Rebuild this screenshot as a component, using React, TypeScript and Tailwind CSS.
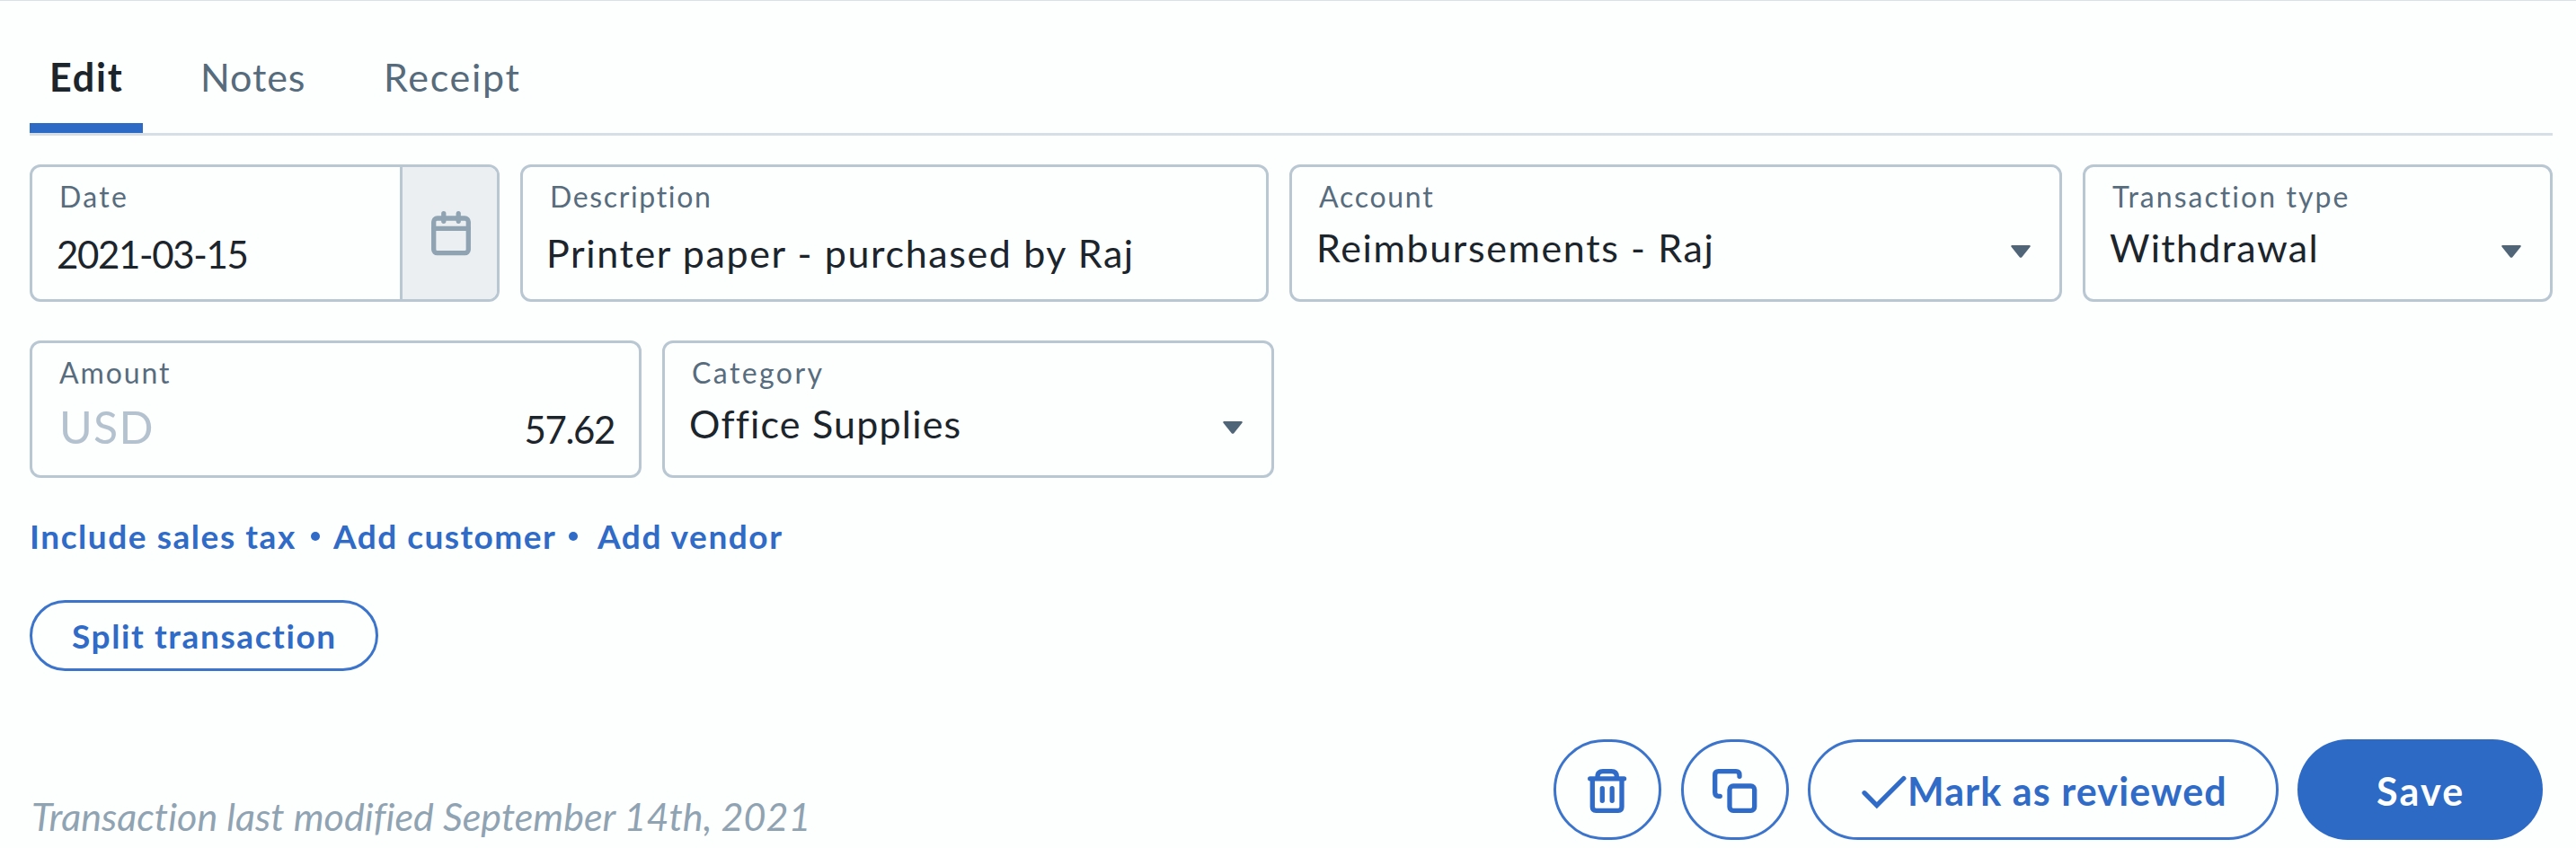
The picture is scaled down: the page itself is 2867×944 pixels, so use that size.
import type { ReactNode } from "react";

type FieldProps = {
  label: string;
  labelClass: string;
  className: string;
  children: ReactNode;
  aside?: ReactNode;
};

function Field({ label, labelClass, className, children, aside }: FieldProps) {
  return (
    <div
      className={`flex h-[153px] shrink-0 overflow-hidden rounded-[12px] border-[3px] border-[#b9c7d2] bg-[#fdfefe] ${className}`}
    >
      <div className="flex min-w-0 flex-1 flex-col pt-[13px]">
        <div className={`pl-[30px] text-[32px] leading-[40px] text-[#576c7d] ${labelClass}`}>{label}</div>
        {children}
      </div>
      {aside}
    </div>
  );
}

function Caret() {
  return (
    <svg className="mt-[21px] h-[16px] w-[24px] shrink-0" viewBox="0 0 24 16" fill="#506577">
      <path d="M2.4 1h19.2c1.1 0 1.5 1 .9 1.8l-9.2 11.4c-.7.8-1.9.8-2.6 0L1.500 2.800C.9 2 1.300 1 2.400 1z" />
    </svg>
  );
}

function SelectValue({ text, textClass, padClass }: { text: string; textClass: string; padClass: string }) {
  return (
    <div className={`mt-[12px] flex justify-between pl-[27px] text-[43px] leading-[50px] text-[#1c252c] ${padClass}`}>
      <span className={textClass}>{text}</span>
      <Caret />
    </div>
  );
}

function Dot() {
  return <span className="mt-[20px] size-[10px] rounded-full bg-[#2f6bc7]" />;
}

export default function App() {
  return (
    <div className="h-[944px] w-[2867px] overflow-hidden whitespace-nowrap border-t border-[#d8e1e9] bg-[#fdfefe] pl-[33px] font-['Lato',sans-serif] text-[#1c252c]">
      <nav className="flex h-[150px] w-[2808px] border-b-[3px] border-[#d6dfe6] text-[43px] leading-[50px] text-[#566b7c]">
        <div className="w-[126px] border-b-[11px] border-[#2d6ac6] pt-[60px] pl-[22px] font-bold tracking-[1.8px] text-[#1c252c]">
          Edit
        </div>
        <div className="ml-[64px] w-[204px] pt-[60px] tracking-[0.9px]">Notes</div>
        <div className="pt-[60px] tracking-[1.7px]">Receipt</div>
      </nav>

      <div className="mt-[32px] flex gap-[23px]">
        <Field
          label="Date"
          labelClass="tracking-[2.33px]"
          className="w-[523px]"
          aside={
            <div className="flex w-[108px] shrink-0 border-l-[3px] border-[#b9c7d2] bg-[#ebeff2] pt-[47px] pl-[30px]">
              <svg
                className="h-[54px] w-[48px]"
                viewBox="478 233 48 54"
                fill="none"
                stroke="#8fa3b2"
                strokeWidth="5.3"
                strokeLinecap="round"
              >
                <rect x="482.7" y="243" width="38.6" height="38.7" rx="4" />
                <path d="M482.700 254.300h38.600M493.800 237.700v8.600M510.200 237.700v8.600" />
              </svg>
            </div>
          }
        >
          <div className="mt-[19px] pl-[27px] text-[42px] leading-[50px] tracking-[-1.35px]">2021-03-15</div>
        </Field>
        <Field label="Description" labelClass="tracking-[1.65px]" className="w-[833px]">
          <div className="mt-[18px] pl-[26px] text-[43px] leading-[50px] tracking-[1.62px]">
            Printer paper - purchased by Raj
          </div>
        </Field>
        <Field label="Account" labelClass="tracking-[1.73px]" className="w-[860px]">
          <SelectValue text="Reimbursements - Raj" textClass="tracking-[1.63px]" padClass="pr-[31px]" />
        </Field>
        <Field label="Transaction type" labelClass="tracking-[2.04px]" className="w-[523px]">
          <SelectValue text="Withdrawal" textClass="tracking-[1.31px]" padClass="pr-[31px]" />
        </Field>
      </div>

      <div className="mt-[43px] flex gap-[23px]">
        <Field label="Amount" labelClass="tracking-[1.89px]" className="w-[681px]">
          <div className="mt-[10px] flex justify-between pr-[27px] pl-[30px]">
            <span className="text-[50px] leading-[60px] tracking-[1.3px] text-[#b3c2ce]">USD</span>
            <span className="mt-[8px] text-[42px] leading-[50px] tracking-[-1.37px]">57.62</span>
          </div>
        </Field>
        <Field label="Category" labelClass="tracking-[2.42px]" className="w-[681px]">
          <SelectValue text="Office Supplies" textClass="tracking-[1.2px]" padClass="pr-[31px]" />
        </Field>
      </div>

      <div className="mt-[40px] flex text-[37px] leading-[50px] font-bold text-[#2f6bc7]">
        <span className="w-[313px] tracking-[1.56px]">Include sales tax</span>
        <Dot />
        <span className="ml-[15px] w-[262px] tracking-[1.46px]">Add customer</span>
        <Dot />
        <span className="ml-[22px] tracking-[1.55px]">Add vendor</span>
      </div>

      <button className="mt-[46px] flex h-[79px] w-[388px] rounded-full border-[3px] border-[#3b74ca] pt-[12px] pl-[44px] text-[37px] leading-[50px] font-bold tracking-[1.61px] text-[#2f6bc7]">
        Split transaction
      </button>

      <div className="mt-[76px] flex h-[112px]">
        <div className="w-[1696px] pt-[61px] pl-[2px] text-[43px] leading-[50px] tracking-[0.04px] text-[#8fa3b2] italic">
          Transaction last modified September 14th, 2021
        </div>
        <button className="flex w-[120px] rounded-full border-[3px] border-[#3b74ca] pt-[28px] pl-[33px]">
          <svg
            className="h-[54px] w-[48px]"
            viewBox="1765 854 48 54"
            fill="none"
            stroke="#2f6bc7"
            strokeWidth="5.3"
            strokeLinecap="round"
            strokeLinejoin="round"
          >
            <path d="M1769.700 866.800h37.900M1772.300 866.800v31.500q0 4 4 4h24.700q4 0 4-4v-31.500M1778 866.500v-1.800q0-6 6-6h9.400q6 0 6 6v1.800M1783.300 877.700v13.600M1794.200 877.700v13.600" />
          </svg>
        </button>
        <button className="ml-[22px] flex w-[120px] rounded-full border-[3px] border-[#3b74ca] pt-[28px] pl-[29px]">
          <svg
            className="h-[54px] w-[56px]"
            viewBox="1903 854 56 54"
            fill="none"
            stroke="#2f6bc7"
            strokeWidth="5.3"
            strokeLinecap="round"
          >
            <path d="M1914.300 886.300h-1.600q-4 0-4-4v-19.600q0-4 4-4h19.300q4 0 4 4v1.600" />
            <rect x="1925" y="875" width="27.700" height="27.300" rx="4" />
          </svg>
        </button>
        <button className="ml-[21px] flex w-[524px] rounded-full border-[3px] border-[#3b74ca] pt-[30px] pl-[55px] text-[43px] leading-[50px] font-bold tracking-[1.1px] text-[#2f6bc7]">
          <svg
            className="mt-[3px] h-[46px] w-[53px]"
            viewBox="2070 859 53 46"
            fill="none"
            stroke="#2f6bc7"
            strokeWidth="5.3"
            strokeLinecap="round"
          >
            <path d="M2075 882.700l13.800 13.800 30-30" />
          </svg>
          Mark as reviewed
        </button>
        <button className="ml-[21px] flex w-[273px] rounded-full bg-[#2d6ac6] pt-[33px] pl-[88px] text-[43px] leading-[50px] font-bold tracking-[2.2px] text-[#fdfefe]">
          Save
        </button>
      </div>
    </div>
  );
}
